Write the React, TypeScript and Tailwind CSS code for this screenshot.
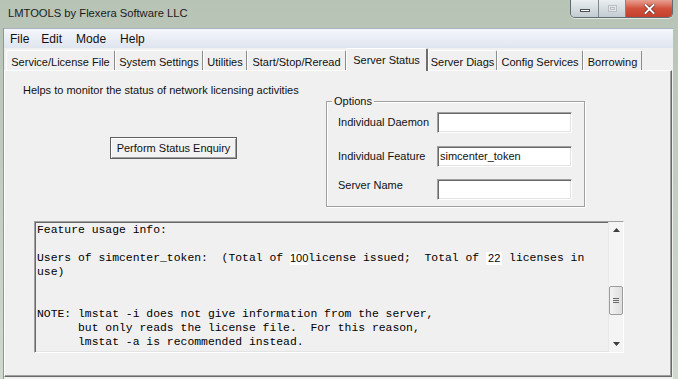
import React from 'react';

const tabs = [
  { label: 'Service/License File', cls: 'w-[109px]' },
  { label: 'System Settings', cls: 'w-[88px]' },
  { label: 'Utilities', cls: 'w-[44px]' },
  { label: 'Start/Stop/Reread', cls: 'w-[99px]' },
  { label: 'Server Status', cls: 'w-[82px]', active: true },
  { label: 'Server Diags', cls: 'w-[69px]' },
  { label: 'Config Services', cls: 'w-[86px]' },
  { label: 'Borrowing', cls: 'w-[59px]' },
];

const sunken =
  'border border-t-[#a0a0a0] border-l-[#a0a0a0] border-b-white border-r-white shadow-[inset_1px_1px_0_#696969,inset_-1px_-1px_0_#e3e3e3]';

function CaptionButtons() {
  return (
    <div className="flex self-start mr-[5px] h-[18px] rounded-b-[5px] border border-t-0 border-[#5f6b73] overflow-hidden shadow-[0_1px_0_rgba(255,255,255,0.6)]">
      <div className="w-[28px] flex items-center justify-center bg-gradient-to-b from-[#e9eef0] to-[#c3ccd2] border-r border-[#7d878e]">
        <div className="w-[10px] h-[3px] bg-white border border-[#4a4f54] mt-[4px]" />
      </div>
      <div className="w-[27px] flex items-center justify-center bg-gradient-to-b from-[#e9eef0] to-[#c3ccd2] border-r border-[#7d878e]">
        <div className="w-[9px] h-[7px] border border-[#b8bec3] bg-[#e4e8ea] flex items-center justify-center">
          <div className="w-[5px] h-[3px] border border-[#b8bec3]" />
        </div>
      </div>
      <div className="w-[46px] flex items-center justify-center bg-gradient-to-b from-[#e8a092] via-[#d0513d] to-[#c4402c]">
        <svg width="11" height="10" viewBox="0 0 11 10">
          <path d="M1.5 1 L9.5 9 M9.5 1 L1.5 9" stroke="#5a1c14" strokeWidth="3.2" strokeLinecap="square" />
          <path d="M1.5 1 L9.5 9 M9.5 1 L1.5 9" stroke="#ffffff" strokeWidth="2" strokeLinecap="square" />
        </svg>
      </div>
    </div>
  );
}

function Tab({ label, cls, active }: { label: string; cls: string; active?: boolean }) {
  if (active) {
    return (
      <div
        className={`${cls} relative z-10 h-[23px] -mb-[1px] bg-[#f0f0f0] border-t border-l border-t-white border-l-white border-r-2 border-r-[#6e6e6e] rounded-t-[2px] flex justify-center pt-[4px]`}
      >
        <span className="leading-[14px]">{label}</span>
      </div>
    );
  }
  return (
    <div
      className={`${cls} h-[20px] border-t border-l border-t-white border-l-white border-r border-r-[#8c8c8c] rounded-t-[2px] flex justify-center pt-[4px]`}
    >
      <span className="leading-[14px]">{label}</span>
    </div>
  );
}

function ScrollBar() {
  return (
    <div className="w-[15px] flex flex-col items-center bg-[#f4f4f4] border-l border-[#e8e8e8]">
      <svg className="mt-[6px]" width="7" height="4" viewBox="0 0 7 4">
        <path d="M3.5 0 L7 4 L0 4 Z" fill="#3c3c3c" />
      </svg>
      <div className="mt-[54px] w-[14px] h-[29px] rounded-[2px] border border-[#9c9c9c] bg-gradient-to-r from-[#f3f3f3] to-[#dedede] flex flex-col items-center justify-center gap-[1px]">
        <div className="w-[6px] h-[1px] bg-[#6a6a6a]" />
        <div className="w-[6px] h-[1px] bg-[#6a6a6a]" />
        <div className="w-[6px] h-[1px] bg-[#6a6a6a]" />
      </div>
      <div className="flex-1" />
      <svg className="mb-[6px]" width="7" height="4" viewBox="0 0 7 4">
        <path d="M0 0 L7 0 L3.5 4 Z" fill="#3c3c3c" />
      </svg>
    </div>
  );
}

const noteLines = [
  'NOTE: lmstat -i does not give information from the server,',
  '      but only reads the license file.  For this reason,',
  '      lmstat -a is recommended instead.',
];

export default function App() {
  return (
    <div className="w-[678px] h-[379px] overflow-hidden flex flex-col bg-gradient-to-b from-[#b7c3b5] to-[#cfd9ce] font-['Liberation_Sans',Arial,sans-serif] text-[11px] text-[#111]">
      {/* title bar */}
      <div className="h-[28px] flex items-center justify-between">
        <span className="pl-[8px] pb-[2px] text-[11.2px] text-[#1b1b1b]">LMTOOLS by Flexera Software LLC</span>
        <CaptionButtons />
      </div>

      {/* client area */}
      <div className="flex-1 flex flex-col ml-[3px] mr-[5px] bg-[#f0f0f0] border-l border-[#8e998d]">
        <div className="h-[20px] flex items-center text-[12px] bg-gradient-to-b from-[#f4f6fb] to-[#dfe5ef] border-t border-[#aab3bd] pl-[1px]">
          <span className="px-[5px]">File</span>
          <span className="px-[7px]">Edit</span>
          <span className="px-[7px]">Mode</span>
          <span className="px-[7px]">Help</span>
        </div>

        <div className="h-[22px] flex items-end pl-[2px]">
          {tabs.map((t) => (
            <Tab key={t.label} {...t} />
          ))}
        </div>

        <div className="flex-1 mb-[2px] mr-[1px] border border-t-white border-l-white border-r-[#696969] border-b-[#696969] shadow-[inset_-1px_-1px_0_#a0a0a0]">
          <div className="flex">
            <div className="w-[321px] pl-[18px] pt-[12px]">
              <p className="leading-[14px]">Helps to monitor the status of network licensing activities</p>
              <button className="mt-[40px] ml-[87px] w-[127px] h-[22px] bg-[#f2f2f2] border border-[#5f5f5f] shadow-[inset_1px_1px_0_#fff,inset_-1px_-1px_0_#a0a0a0] text-[11px]">
                Perform Status Enquiry
              </button>
            </div>

            <div className="relative mt-[30px] w-[259px] h-[106px] border border-[#a0a0a0] shadow-[inset_1px_1px_0_#fff,1px_1px_0_#fff] pt-[10px] pl-[11px]">
              <span className="absolute -top-[8px] left-[5px] px-[2px] bg-[#f0f0f0] leading-[14px]">Options</span>
              <div className="flex items-center">
                <span className="w-[99px]">Individual Daemon</span>
                <div className={`w-[135px] h-[21px] bg-white ${sunken}`} />
              </div>
              <div className="flex items-center mt-[13px]">
                <span className="w-[99px]">Individual Feature</span>
                <div className={`w-[135px] h-[21px] bg-white ${sunken} flex items-center pl-[2px]`}>simcenter_token</div>
              </div>
              <div className="flex items-center mt-[10px]">
                <span className="w-[99px] mb-[8px]">Server Name</span>
                <div className={`w-[135px] h-[21px] bg-white ${sunken}`} />
              </div>
            </div>
          </div>

          <div className={`mt-[14px] ml-[29px] w-[590px] h-[132px] flex bg-[#f0f0f0] ${sunken}`}>
            <div className="flex-1 pl-[2px] pt-[1px] font-['Liberation_Mono','Courier_New',monospace] text-[11.4px] leading-[14px] text-black whitespace-pre">
              <div>Feature usage info:</div>
              <div className="h-[14px]" />
              <div className="flex items-center">
                <span>{'Users of simcenter_token:  (Total of '}</span>
                <span className="bg-white leading-[13px] font-['Liberation_Sans',Arial,sans-serif] text-[11px]">100</span>
                <span>{'license issued;  Total of '}</span>
                <span className="bg-white px-[2px] leading-[13px] font-['Liberation_Sans',Arial,sans-serif] text-[11px]">22</span>
                <span>{' licenses in'}</span>
              </div>
              <div>use)</div>
              <div className="h-[28px]" />
              {noteLines.map((l) => (
                <div key={l}>{l}</div>
              ))}
            </div>
            <ScrollBar />
          </div>
        </div>
      </div>
    </div>
  );
}
